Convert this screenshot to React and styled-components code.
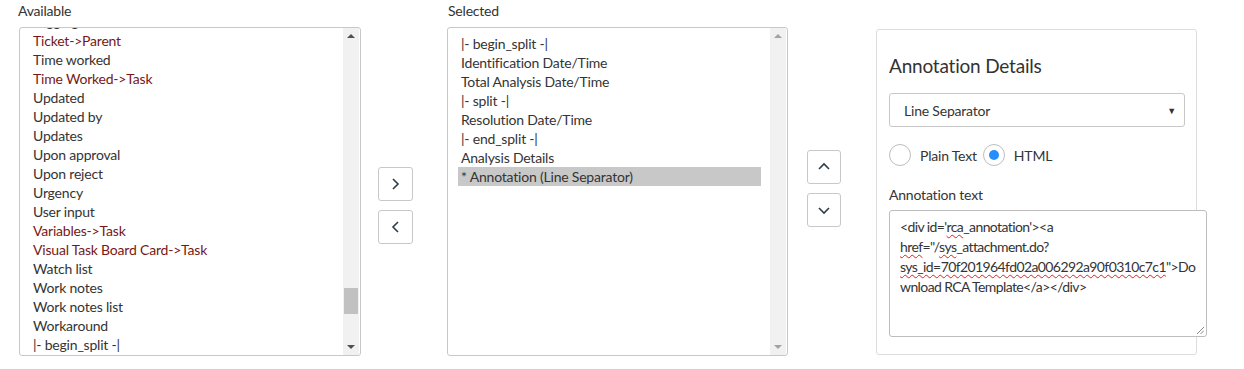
import React from "react";
import styled, { createGlobalStyle } from "styled-components";

const GlobalStyle = createGlobalStyle`
  body {
    margin: 0;
    background: #fff;
    font-family: Lato, "Liberation Sans", sans-serif;
    font-size: 14px;
    letter-spacing: -0.2px;
    color: #343434;
  }
`;

const available = [
  { label: "Tagging", ref: false },
  { label: "Ticket->Parent", ref: true },
  { label: "Time worked" },
  { label: "Time Worked->Task", ref: true },
  { label: "Updated" },
  { label: "Updated by" },
  { label: "Updates" },
  { label: "Upon approval" },
  { label: "Upon reject" },
  { label: "Urgency" },
  { label: "User input" },
  { label: "Variables->Task", ref: true },
  { label: "Visual Task Board Card->Task", ref: true },
  { label: "Watch list" },
  { label: "Work notes" },
  { label: "Work notes list" },
  { label: "Workaround" },
  { label: "|- begin_split -|" },
];

const selected = [
  "|- begin_split -|",
  "Identification Date/Time",
  "Total Analysis Date/Time",
  "|- split -|",
  "Resolution Date/Time",
  "|- end_split -|",
  "Analysis Details",
  "* Annotation (Line Separator)",
];

function Chevron({ dir }) {
  const pts = {
    right: "4,2 9,7 4,12",
    left: "9,2 4,7 9,12",
    up: "2,9 7,4 12,9",
    down: "2,5 7,10 12,5",
  }[dir];
  return (
    <svg width="14" height="14" viewBox="0 0 14 14">
      <polyline points={pts} fill="none" stroke="#2e3d49" strokeWidth="1.6" />
    </svg>
  );
}

function Scrollbar({ active, thumbTop, thumbHeight }) {
  return (
    <Track>
      <Arrow $up $active={active} />
      {active && <Thumb style={{ top: thumbTop, height: thumbHeight }} />}
      <Arrow $active={active} />
    </Track>
  );
}

export default function App() {
  return (
    <>
      <GlobalStyle />
      <Page>
        <Column $width={342}>
          <Label $shift={-1}>Available</Label>
          <ListBox>
            <ListInner $offset={-16}>
              {available.map((it) => (
                <Item key={it.label} $ref={it.ref}>
                  {it.label}
                </Item>
              ))}
            </ListInner>
            <Scrollbar active thumbTop={260} thumbHeight={26} />
          </ListBox>
        </Column>

        <ButtonStack $top={167} $left={17}>
          <MoveButton $width={35}>
            <Chevron dir="right" />
          </MoveButton>
          <MoveButton $width={35}>
            <Chevron dir="left" />
          </MoveButton>
        </ButtonStack>

        <Column $width={341} $left={34}>
          <Label $shift={1}>Selected</Label>
          <ListBox>
            <ListInner $offset={6}>
              {selected.map((s, i) => (
                <Item key={s} $active={i === selected.length - 1}>
                  {s}
                </Item>
              ))}
            </ListInner>
            <Scrollbar />
          </ListBox>
        </Column>

        <ButtonStack $top={150} $left={19}>
          <MoveButton $width={34}>
            <Chevron dir="up" />
          </MoveButton>
          <MoveButton $width={34}>
            <Chevron dir="down" />
          </MoveButton>
        </ButtonStack>

        <Panel>
          <PanelTitle>Annotation Details</PanelTitle>
          <Select>
            <span>Line Separator</span>
            <Caret>▼</Caret>
          </Select>
          <RadioRow>
            <Radio />
            <RadioLabel>Plain Text</RadioLabel>
            <Radio $checked />
            <RadioLabel>HTML</RadioLabel>
          </RadioRow>
          <FieldLabel>Annotation text</FieldLabel>
          <TextArea>
            <div>
              &lt;div id='<Typo>rca</Typo>_annotation'&gt;&lt;a
            </div>
            <div>
              <Typo>href</Typo>="/<Typo>sys</Typo>_attachment.do?
            </div>
            <div>
              <Typo>sys_id=70f201964fd02a006292a90f0310c7c1</Typo>"&gt;Do
            </div>
            <div>wnload RCA Template&lt;/a&gt;&lt;/div&gt;</div>
            <Grip viewBox="0 0 8 8" width="8" height="8">
              <line x1="1" y1="8" x2="8" y2="1" stroke="#888" strokeWidth="1" />
              <line x1="4.5" y1="8" x2="8" y2="4.5" stroke="#888" strokeWidth="1" />
            </Grip>
          </TextArea>
        </Panel>
      </Page>
    </>
  );
}

const Page = styled.div`
  display: flex;
  align-items: flex-start;
  padding-left: 19px;
`;

const Column = styled.div`
  width: ${(p) => p.$width}px;
  margin-left: ${(p) => p.$left || 0}px;
  flex-shrink: 0;
`;

const Label = styled.div`
  height: 27px;
  line-height: 22px;
  margin-left: ${(p) => p.$shift || 0}px;
  color: #333;
`;

const ListBox = styled.div`
  position: relative;
  height: 329px;
  box-sizing: border-box;
  border: 1px solid #c8c8c8;
  border-radius: 3px;
  overflow: hidden;
  display: flex;
`;

const ListInner = styled.div`
  flex: 1;
  padding: 0 9px 0 10px;
  margin-top: ${(p) => p.$offset}px;
`;

const Item = styled.div`
  height: 19px;
  line-height: 19px;
  padding-left: 3px;
  white-space: nowrap;
  color: ${(p) => (p.$ref ? "#771717" : "#343434")};
  background: ${(p) => (p.$active ? "#c8c8c8" : "transparent")};
`;

const Track = styled.div`
  position: relative;
  width: 16px;
  margin-right: 1px;
  background: #f1f1f1;
  display: flex;
  flex-direction: column;
  justify-content: space-between;
  align-items: center;
  padding: 6px 0;
`;

const Arrow = styled.div`
  width: 0;
  height: 0;
  border-left: 4px solid transparent;
  border-right: 4px solid transparent;
  ${(p) => (p.$up ? "border-bottom" : "border-top")}: 4px solid
    ${(p) => (p.$active ? "#505050" : "#a3a3a3")};
`;

const Thumb = styled.div`
  position: absolute;
  left: 1px;
  width: 14px;
  background: #c1c1c1;
`;

const ButtonStack = styled.div`
  display: flex;
  flex-direction: column;
  gap: 9px;
  margin-top: ${(p) => p.$top}px;
  margin-left: ${(p) => p.$left}px;
  flex-shrink: 0;
`;

const MoveButton = styled.button`
  width: ${(p) => p.$width}px;
  height: 34px;
  padding: 0;
  display: flex;
  align-items: center;
  justify-content: center;
  background: #fff;
  border: 1px solid #c8c8c8;
  border-radius: 3px;
`;

const Panel = styled.div`
  margin-top: 29px;
  margin-left: 35px;
  width: 321px;
  height: 326px;
  box-sizing: border-box;
  border: 1px solid #dcdcdc;
  border-radius: 3px;
  padding: 0 0 0 12px;
  flex-shrink: 0;
`;

const PanelTitle = styled.div`
  font-size: 19px;
  letter-spacing: -0.2px;
  color: #333;
  margin-top: 24px;
  height: 39px;
`;

const Select = styled.div`
  width: 296px;
  height: 34px;
  box-sizing: border-box;
  border: 1px solid #c8c8c8;
  border-radius: 3px;
  display: flex;
  align-items: center;
  justify-content: space-between;
  padding: 0 8px 0 14px;
  color: #343434;
`;

const Caret = styled.span`
  font-size: 9px;
  color: #333;
`;

const RadioRow = styled.div`
  display: flex;
  align-items: center;
  margin-top: 17px;
  height: 22px;
`;

const Radio = styled.span`
  width: 22px;
  height: 22px;
  box-sizing: border-box;
  border: 1px solid #bdbdbd;
  border-radius: 50%;
  display: flex;
  align-items: center;
  justify-content: center;
  &::after {
    content: "";
    width: 10px;
    height: 10px;
    border-radius: 50%;
    background: ${(p) => (p.$checked ? "#278efc" : "transparent")};
  }
`;

const RadioLabel = styled.span`
  margin: 0 6px 0 9px;
  color: #343434;
`;

const FieldLabel = styled.div`
  margin-top: 20px;
  height: 21px;
  color: #343434;
`;

const TextArea = styled.div`
  position: relative;
  margin-top: 3px;
  width: 318px;
  height: 127px;
  box-sizing: border-box;
  border: 1px solid #bdbdbd;
  border-radius: 3px;
  padding: 6px 10px;
  line-height: 20px;
  letter-spacing: -0.6px;
  color: #343434;
  white-space: nowrap;
  background: #fff;
`;

const Typo = styled.span`
  text-decoration: underline wavy #e02020;
  text-decoration-thickness: 1px;
  text-underline-offset: 2px;
`;

const Grip = styled.svg`
  position: absolute;
  right: 2px;
  bottom: 2px;
`;
